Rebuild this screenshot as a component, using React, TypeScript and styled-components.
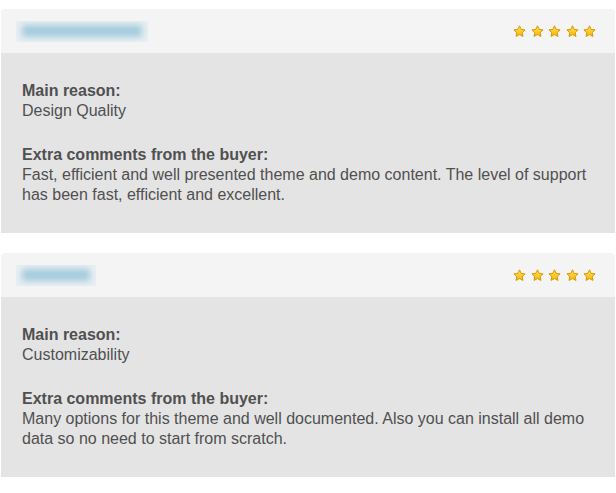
import * as React from 'react';
import styled, { createGlobalStyle } from 'styled-components';

const GlobalStyle = createGlobalStyle`
  body {
    margin: 0;
    background: #ffffff;
    font-family: "Liberation Sans", Arial, Helvetica, sans-serif;
  }
`;

const Page = styled.div`
  display: flex;
  flex-direction: column;
  gap: 20px;
  padding: 9px 1px 0 1px;
`;

const Card = styled.section`
  display: flex;
  flex-direction: column;
`;

const Header = styled.header`
  display: flex;
  align-items: center;
  justify-content: space-between;
  height: 44px;
  padding: 0 19px 0 15px;
  box-sizing: border-box;
  background: #f4f4f4;
  border-radius: 4px 4px 0 0;
`;

const BlurName = styled.div<{ $w: number }>`
  width: ${(p) => p.$w}px;
  height: 21px;
  background: #e9eff2;
  overflow: hidden;
  display: flex;
  align-items: center;
  justify-content: center;
`;

const BlurInk = styled.div`
  width: calc(100% - 12px);
  height: 12px;
  background: #a4cbdd;
  filter: blur(3px);
`;

const Stars = styled.div`
  display: flex;
  gap: 4.5px;
`;

const Body = styled.div`
  background: #e4e4e4;
  padding: 28px 21px 28px 21px;
  color: #505050;
  font-size: 16px;
  line-height: 20px;
`;

const Group = styled.div`
  & + & {
    margin-top: 24px;
  }
`;

const Label = styled.div`
  font-weight: bold;
`;

const Value = styled.div``;

const Star: React.FC<{ id: string }> = ({ id }) => (
  <svg width="13" height="13" viewBox="0 0 24 24">
    <defs>
      <linearGradient id={id} x1="0" y1="0" x2="0" y2="1">
        <stop offset="0" stopColor="#ffe65e" />
        <stop offset="1" stopColor="#f7b500" />
      </linearGradient>
    </defs>
    <path
      d="M12 1.5l3.1 6.6 7.2.9-5.3 5 1.4 7.1L12 17.6l-6.4 3.5L7 14l-5.3-5 7.2-.9z"
      fill={`url(#${id})`}
      stroke="#d69500"
      strokeWidth="1.8"
      strokeLinejoin="round"
    />
  </svg>
);

interface Review {
  nameWidth: number;
  reason: string;
  comment: string;
}

const reviews: Review[] = [
  {
    nameWidth: 132,
    reason: 'Design Quality',
    comment:
      'Fast, efficient and well presented theme and demo content. The level of support has been fast, efficient and excellent.',
  },
  {
    nameWidth: 80,
    reason: 'Customizability',
    comment:
      'Many options for this theme and well documented. Also you can install all demo data so no need to start from scratch.',
  },
];

export default function App() {
  return (
    <>
      <GlobalStyle />
      <Page>
        {reviews.map((r, i) => (
          <Card key={i}>
            <Header>
              <BlurName $w={r.nameWidth}>
                <BlurInk />
              </BlurName>
              <Stars>
                {[0, 1, 2, 3, 4].map((s) => (
                  <Star key={s} id={`star-${i}-${s}`} />
                ))}
              </Stars>
            </Header>
            <Body>
              <Group>
                <Label>Main reason:</Label>
                <Value>{r.reason}</Value>
              </Group>
              <Group>
                <Label>Extra comments from the buyer:</Label>
                <Value>{r.comment}</Value>
              </Group>
            </Body>
          </Card>
        ))}
      </Page>
    </>
  );
}
